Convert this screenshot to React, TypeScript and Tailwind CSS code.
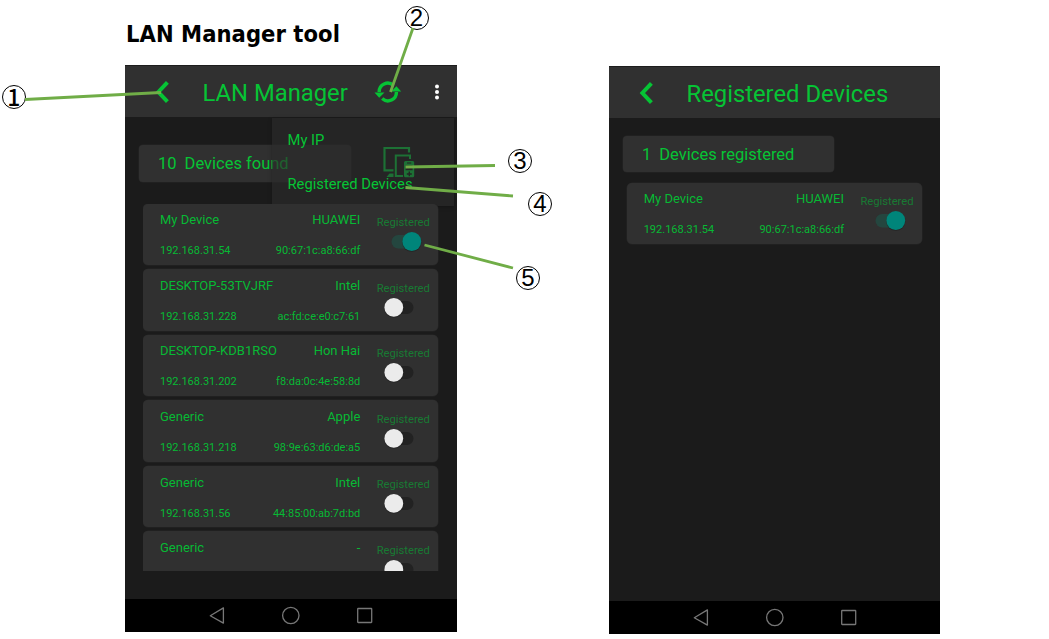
import type { ReactNode } from "react";

type Device = { name: string; vendor: string; ip: string; mac: string; on?: boolean };

const devices: Device[] = [
  { name: "My Device", vendor: "HUAWEI", ip: "192.168.31.54", mac: "90:67:1c:a8:66:df", on: true },
  { name: "DESKTOP-53TVJRF", vendor: "Intel", ip: "192.168.31.228", mac: "ac:fd:ce:e0:c7:61" },
  { name: "DESKTOP-KDB1RSO", vendor: "Hon Hai", ip: "192.168.31.202", mac: "f8:da:0c:4e:58:8d" },
  { name: "Generic", vendor: "Apple", ip: "192.168.31.218", mac: "98:9e:63:d6:de:a5" },
  { name: "Generic", vendor: "Intel", ip: "192.168.31.56", mac: "44:85:00:ab:7d:bd" },
  { name: "Generic", vendor: "-", ip: "", mac: "" },
];

function Toggle({ on }: { on?: boolean }) {
  return (
    <svg className="block h-[24px] w-[60px]" viewBox="0 0 60 24">
      {on ? (
        <>
          <rect x="18.5" y="5" width="27" height="13.4" rx="6.7" fill="#24463f" />
          <circle cx="38.8" cy="12.3" r="9.7" fill="#000" opacity=".2" />
          <circle cx="38.8" cy="11.5" r="9.4" fill="#00857a" />
        </>
      ) : (
        <>
          <rect x="13.5" y="5" width="27" height="13" rx="6.5" fill="#222" />
          <circle cx="20.8" cy="12" r="9.8" fill="#000" opacity=".2" />
          <circle cx="20.8" cy="11.4" r="9.4" fill="#ebebeb" />
        </>
      )}
    </svg>
  );
}

function DeviceCard({ device }: { device: Device }) {
  return (
    <div className="flex h-[61.6px] w-[295px] shrink-0 rounded-[5px] bg-[#303030] pl-[16.7px] shadow-[0_0_0_0.5px_#262626]">
      <div className="w-[200.3px] text-[#07b934]">
        <div className="flex justify-between pt-[8.8px] text-[13px] leading-[16px]">
          <span>{device.name}</span>
          <span>{device.vendor}</span>
        </div>
        <div className="flex justify-between pt-[16px] text-[11px] leading-[14px]">
          <span>{device.ip}</span>
          <span>{device.mac}</span>
        </div>
      </div>
      <div className="ml-[13px] w-[60px] pt-[12.5px] text-center text-[11.2px] leading-[14px] text-[#187a33]">
        Registered
        <Toggle on={device.on} />
      </div>
    </div>
  );
}

function BackIcon() {
  return (
    <svg className="h-[24px] w-[16px]" viewBox="0 0 16 24" fill="none" stroke="#06c435" strokeWidth="4">
      <path d="M12.4 2.4 3.4 12l9 9.6" />
    </svg>
  );
}

function RefreshIcon() {
  return (
    <svg className="h-[24px] w-[28px]" viewBox="0 0 28 24">
      <g fill="none" stroke="#06c435" strokeWidth="3.4">
        <path d="M5.2 12A8.5 8.5 0 0 1 19.4 5.4" />
        <path d="M22.4 12A8.5 8.5 0 0 1 8.2 18.6" />
      </g>
      <path d="M.5 12.5h10L5.2 17.8zM17.2 11.5h10L22.4 6.2z" fill="#06c435" />
    </svg>
  );
}

function DevicesIcon() {
  return (
    <svg className="h-[32px] w-[32px]" viewBox="0 0 32 32" fill="none" stroke="#1d7135">
      <path d="M26 6.5V2H1.5v22.3h9" strokeWidth="2.2" />
      <path d="M3.5 31l3-3.6h4V31z" fill="#1d7135" stroke="none" />
      <path d="M27 13V9.4H12.8V30H20" strokeWidth="2" />
      <path
        d="M22.5 15h7.2a1.5 1.5 0 0 1 1.5 1.5v13.2a1.5 1.5 0 0 1-1.5 1.5h-7.2a1.5 1.5 0 0 1-1.5-1.5V16.5a1.5 1.5 0 0 1 1.5-1.5zM22.6 19.2v5h7v-5zM24 16.6v1h4.2v-1zM25.6 25.5v1.8h-1.8v1.4h1.8v1.6H27v-1.6h1.8v-1.4H27v-1.8z"
        fill="#1d7135"
        fillRule="evenodd"
        stroke="none"
      />
    </svg>
  );
}

function AndroidNav() {
  return (
    <div className="h-[33px] shrink-0 bg-black">
      <svg className="block h-[33px] w-[331px]" viewBox="0 0 331 33" fill="none" stroke="#777" strokeWidth="1.3">
        <path d="M85.3 16.7 98.4 8.9v15.2z" strokeLinejoin="round" />
        <circle cx="165.8" cy="16.5" r="8.2" />
        <rect x="232.7" y="9.5" width="14" height="14" rx=".5" />
      </svg>
    </div>
  );
}

function CountBox({ count, label, className }: { count: number; label: string; className: string }) {
  return (
    <div className={`flex h-[36.5px] shrink-0 items-center gap-[8px] rounded-[4px] bg-[#303030] pt-[3px] pl-[19px] text-[16.5px] text-[#06c435] shadow-[0_0_0_0.5px_#262626] ${className}`}>
      <span>{count}</span>
      <span>{label}</span>
    </div>
  );
}

function Header({ children }: { children: ReactNode }) {
  return (
    <header className="flex h-[52px] shrink-0 items-center border-t border-[#1d1d1d] bg-[#303030] text-[23.8px] text-[#06c435]">
      {children}
    </header>
  );
}

function Callout({ digit, className }: { digit: number; className: string }) {
  return (
    <div
      className={`absolute flex h-[24px] w-[24px] items-center justify-center rounded-full border-[1.5px] border-black text-black ${className}`}
    >
      {digit === 1 ? (
        <span className="pb-[2px] font-['Noto_Sans_CJK_JP',sans-serif] text-[23px] leading-[24px] font-medium">{digit}</span>
      ) : (
        <span className="font-['Liberation_Sans',sans-serif] text-[24px] leading-[26px]">{digit}</span>
      )}
    </div>
  );
}

export default function App() {
  return (
    <div className="relative h-[639px] w-[1049px] overflow-hidden bg-white pl-[125px] font-['Roboto',sans-serif]">
      <h1 className="h-[65px] pt-[19px] pl-[1px] font-['DejaVu_Sans_Condensed','DejaVu_Sans',sans-serif] text-[23.5px] leading-[30px] font-bold tracking-[0.05px] whitespace-nowrap text-black">
        LAN Manager tool
      </h1>
      <div className="flex items-start gap-[152px]">
        <section className="relative flex h-[567px] w-[332px] flex-col bg-[#1b1b1b]">
          <Header>
            <span className="ml-[30px] flex"><BackIcon /></span>
            <span className="mt-[4px] ml-[31.5px] w-[148px] whitespace-nowrap">LAN Manager</span>
            <span className="ml-[23.5px] flex"><RefreshIcon /></span>
            <svg className="ml-[32px] h-[18px] w-[6px]" viewBox="0 0 6 18" fill="#fff">
              <circle cx="3" cy="3.4" r="2" />
              <circle cx="3" cy="9" r="2" />
              <circle cx="3" cy="14.6" r="2" />
            </svg>
          </Header>
          <div className="flex h-[86.5px] shrink-0 items-start pt-[28px] pl-[14px]">
            <CountBox count={10} label="Devices found" className="w-[212px]" />
            <span className="relative z-10 mt-[1px] ml-[31.5px] flex"><DevicesIcon /></span>
          </div>
          <div className="relative z-10 ml-[18.3px] flex h-[367.5px] shrink-0 flex-col gap-[4px] overflow-hidden">
            {devices.map((d, i) => (
              <DeviceCard key={i} device={d} />
            ))}
          </div>
          <div className="flex-1" />
          <AndroidNav />
          <div className="absolute top-[53px] left-[147px] flex h-[87.5px] w-[182px] flex-col gap-[24px] bg-[#2b2b2b]/65 pt-[12px] pl-[15.5px] text-[14.75px] leading-[20px] text-[#06c435] shadow-[0_1px_4px_#0004]">
            <span>My IP</span>
            <span>Registered Devices</span>
          </div>
        </section>

        <section className="mt-[1px] flex h-[568px] w-[331px] flex-col bg-[#1b1b1b]">
          <Header>
            <span className="ml-[29.5px] flex"><BackIcon /></span>
            <span className="mt-[4px] ml-[32px] whitespace-nowrap">Registered Devices</span>
          </Header>
          <div className="h-[64.5px] shrink-0 pt-[17.5px] pl-[14px]">
            <CountBox count={1} label="Devices registered" className="w-[211px]" />
          </div>
          <div className="ml-[18px] flex">
            <DeviceCard device={devices[0]} />
          </div>
          <div className="flex-1" />
          <AndroidNav />
        </section>
      </div>

      <svg className="pointer-events-none absolute inset-0 z-20 h-[639px] w-[1049px]" viewBox="0 0 1049 639" stroke="#70ad47" strokeWidth="2.8">
        <path d="M25 99.5 161 92.5M413 28 390.5 92M405.5 167 495 165.5M405.5 187.5 513 196M424.5 245 513 268" />
      </svg>
      <Callout digit={1} className="top-[84.5px] left-[1.7px]" />
      <Callout digit={2} className="top-[5.5px] left-[404.5px]" />
      <Callout digit={3} className="top-[148.5px] left-[508px]" />
      <Callout digit={4} className="top-[191.5px] left-[528px]" />
      <Callout digit={5} className="top-[265.5px] left-[516px]" />
    </div>
  );
}
